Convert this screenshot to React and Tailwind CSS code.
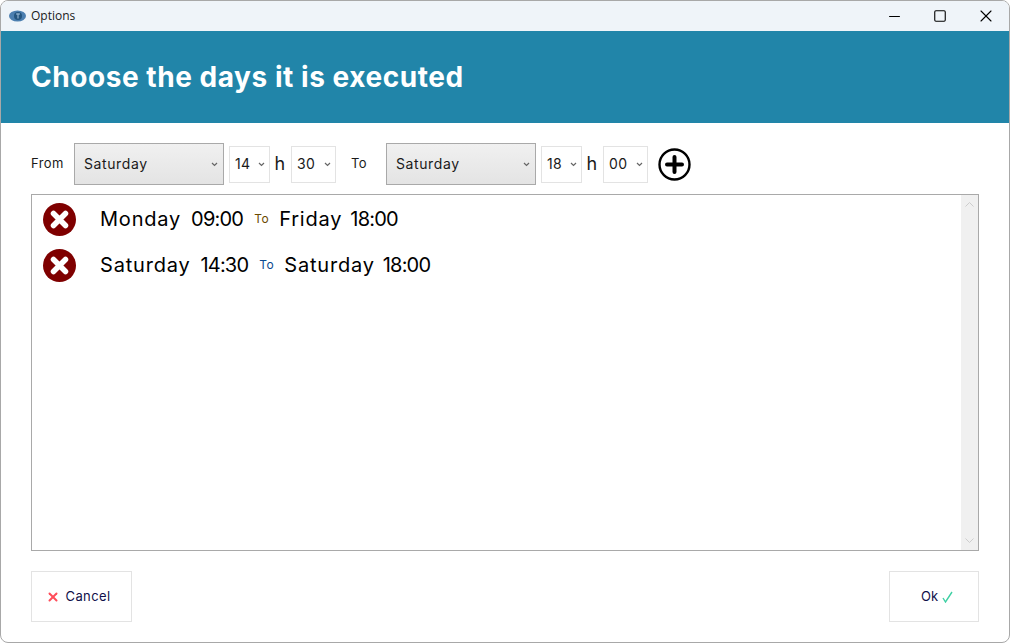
import { Minus, Square, X } from 'lucide-react';

const font = { fontFamily: 'Inter, sans-serif' };

function Chevron({ color = '#666' }) {
  return (
    <svg width="7" height="5" viewBox="0 0 7 5" fill="none" stroke={color} strokeWidth="1.2">
      <path d="M1 1l2.5 2.5L6 1" />
    </svg>
  );
}

function DaySelect({ value }) {
  return (
    <div className="flex h-[42px] w-[150px] items-center justify-between border border-[#a9a9a9] bg-gradient-to-b from-[#f0f0f0] to-[#e4e4e4] pl-[9px] pr-[5px] text-[14px] tracking-[0.6px] text-[#1a1a1a]">
      <span className="pb-[2px]">{value}</span>
      <Chevron />
    </div>
  );
}

function NumSelect({ value, wide }) {
  return (
    <div className={`flex h-[37px] items-center justify-between border border-[#e3e3e3] bg-white pl-[5px] pr-[4px] text-[14px] text-[#1a1a1a] ${wide ? 'w-[45px]' : 'w-[41px]'}`}>
      <span className="pb-[1px]">{value}</span>
      <Chevron />
    </div>
  );
}

function RemoveIcon() {
  return (
    <svg width="33" height="33" viewBox="0 0 33 33" className="shrink-0">
      <circle cx="16.5" cy="16.5" r="16.5" fill="#7f0000" />
      <path d="M10.5 10.5l12 12M22.5 10.5l-12 12" stroke="#fff" strokeWidth="5.5" strokeLinecap="round" />
    </svg>
  );
}

function Row({ from, fromTime, to, toTime, toColor }) {
  return (
    <div className="flex h-[33px] items-center text-[20px] text-black">
      <RemoveIcon />
      <div className="ml-[24px] flex items-center pb-[2px]">
        <span className="tracking-[0.8px]">{from}</span>
        <span className="ml-[10px] tracking-[-0.8px]">{fromTime}</span>
        <span className={`ml-[11px] mr-[10px] text-[12px] tracking-[0.5px] ${toColor}`}>To</span>
        <span className="tracking-[0.8px]">{to}</span>
        <span className="ml-[8px] tracking-[-0.8px]">{toTime}</span>
      </div>
    </div>
  );
}

export default function App() {
  return (
    <div style={font} className="flex h-[643px] w-[1010px] flex-col overflow-hidden rounded-lg border border-[#a8a8a8] bg-white">
      {/* Title bar */}
      <div className="flex h-[30px] shrink-0 items-center bg-[#eff4f9] pl-[8px]">
        <svg width="17" height="12" viewBox="0 0 17 12">
          <ellipse cx="8.5" cy="6" rx="8.5" ry="5.5" fill="#4c7fb0" />
          <circle cx="9" cy="6" r="4" fill="#24557f" />
          <rect x="7" y="3.5" width="4" height="1" fill="#9fbfdc" />
          <rect x="8.5" y="3.5" width="1" height="5" fill="#9fbfdc" />
        </svg>
        <span className="ml-[5px] text-[12px] text-[#1a1a1a]" style={{ fontFamily: '"Open Sans", sans-serif' }}>Options</span>
        <div className="ml-auto flex h-full items-center text-black">
          <div className="flex w-[46px] justify-center"><Minus size={17} strokeWidth={1.6} /></div>
          <div className="flex w-[46px] justify-center"><Square size={14} strokeWidth={1.9} /></div>
          <div className="flex w-[46px] justify-center"><X size={20} strokeWidth={1.3} /></div>
        </div>
      </div>

      {/* Header */}
      <div className="flex h-[92px] shrink-0 items-center bg-[#2185a9] pl-[30px]">
        <h1 className="text-[28px] font-bold tracking-[0.55px] text-white">Choose the days it is executed</h1>
      </div>

      <div className="flex min-h-0 flex-1 flex-col px-[30px]">
        {/* Range picker */}
        <div className="mt-[20px] flex h-[42px] shrink-0 items-center text-[13px] tracking-[0.4px] text-[#1a1a1a]">
          <span className="w-[43px]">From</span>
          <DaySelect value="Saturday" />
          <div className="ml-[5px]"><NumSelect value="14" /></div>
          <span className="w-[20px] pb-[1px] text-center text-[18px]">h</span>
          <div className="ml-[1px]"><NumSelect value="30" wide /></div>
          <span className="ml-[15px] w-[35px]">To</span>
          <DaySelect value="Saturday" />
          <div className="ml-[5px]"><NumSelect value="18" /></div>
          <span className="w-[20px] pb-[1px] text-center text-[18px]">h</span>
          <div className="ml-[1px]"><NumSelect value="00" wide /></div>
          <svg width="33" height="33" viewBox="0 0 33 33" className="ml-[10px]">
            <circle cx="16.5" cy="16.5" r="15" fill="none" stroke="#000" strokeWidth="2.4" />
            <path d="M16.5 9v15M9 16.5h15" stroke="#000" strokeWidth="4" strokeLinecap="round" />
          </svg>
        </div>

        {/* Schedule list */}
        <div className="mt-[9px] flex h-[357px] shrink-0 border border-[#a9a9a9]">
          <div className="flex flex-1 flex-col gap-[13px] pl-[11px] pt-[8px]">
            <Row from="Monday" fromTime="09:00" to="Friday" toTime="18:00" toColor="text-[#6b4a00]" />
            <Row from="Saturday" fromTime="14:30" to="Saturday" toTime="18:00" toColor="text-[#0b4a90]" />
          </div>
          <div className="flex w-[17px] flex-col items-center justify-between bg-[#f0f0f0] py-[7px]">
            <svg width="9" height="5" viewBox="0 0 9 5" fill="none" stroke="#cdcdcd"><path d="M.5 4.5l4-4 4 4" /></svg>
            <svg width="9" height="5" viewBox="0 0 9 5" fill="none" stroke="#cdcdcd"><path d="M.5.5l4 4 4-4" /></svg>
          </div>
        </div>

        {/* Footer buttons */}
        <div className="mt-[20px] flex justify-between">
          <div className="flex h-[51px] w-[101px] items-center justify-center gap-[5px] border border-[#e3e3e3] pr-[6px] text-[13px] tracking-[0.4px] text-[#10104a]">
            <X size={14} strokeWidth={3.4} color="#ff4d5a" />
            <span>Cancel</span>
          </div>
          <div className="flex h-[51px] w-[90px] items-center justify-center gap-[4px] border border-[#e3e3e3] pl-[6px] text-[13px] text-[#10104a]">
            <span>Ok</span>
            <svg width="11" height="12" viewBox="0 0 11 12" fill="none" stroke="#3fd0a4" strokeWidth="1.4">
              <path d="M1 7l2.5 4L10 1" />
            </svg>
          </div>
        </div>
      </div>
    </div>
  );
}
